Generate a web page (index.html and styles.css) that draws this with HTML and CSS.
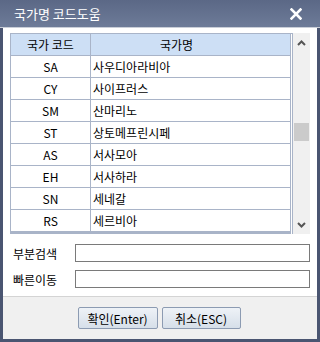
FILE: index.html
```html
<!DOCTYPE html>
<html>
<head>
    <meta charset="utf-8">
    <title>국가명 코드도움</title>
    <link rel="stylesheet" href="styles.css">
</head>
<body>
<div class="window">
    <div class="titlebar">
        <span class="title">국가명 코드도움</span>
        <svg class="close" width="12" height="12" viewBox="0 0 12 12">
            <path d="M1.5 1.5 L10.5 10.5 M10.5 1.5 L1.5 10.5" stroke="#fff" stroke-width="2.6" stroke-linecap="square"/>
        </svg>
    </div>

    <div class="content">
        <div class="list">
            <div class="table">
                <div class="row head">
                    <div class="code">국가 코드</div>
                    <div class="name">국가명</div>
                </div>
                <div class="row"><div class="code">SA</div><div class="name">사우디아라비아</div></div>
                <div class="row"><div class="code">CY</div><div class="name">사이프러스</div></div>
                <div class="row"><div class="code">SM</div><div class="name">산마리노</div></div>
                <div class="row"><div class="code">ST</div><div class="name">상토메프린시페</div></div>
                <div class="row"><div class="code">AS</div><div class="name">서사모아</div></div>
                <div class="row"><div class="code">EH</div><div class="name">서사하라</div></div>
                <div class="row"><div class="code">SN</div><div class="name">세네갈</div></div>
                <div class="row last"><div class="code">RS</div><div class="name">세르비아</div></div>
            </div>
            <div class="scrollbar">
                <svg class="arrow" width="9" height="6" viewBox="0 0 9 6">
                    <path d="M1 5 L4.5 1.5 L8 5" fill="none" stroke="#555" stroke-width="2"/>
                </svg>
                <div class="track"><div class="thumb"></div></div>
                <svg class="arrow" width="9" height="6" viewBox="0 0 9 6">
                    <path d="M1 1 L4.5 4.5 L8 1" fill="none" stroke="#555" stroke-width="2"/>
                </svg>
            </div>
        </div>

        <div class="field">
            <label for="search">부분검색</label>
            <input type="text" id="search">
        </div>
        <div class="field">
            <label for="jump">빠른이동</label>
            <input type="text" id="jump">
        </div>
    </div>

    <div class="footer">
        <button class="ok">확인(Enter)</button>
        <button class="cancel">취소(ESC)</button>
    </div>
</div>
</body>
</html>
```

FILE: styles.css
```css
body {
    margin: 0;
    font-family: "Noto Sans CJK KR", "Liberation Sans", sans-serif;
    font-size: 12px;
    color: #000;
}
.window {
    width: 320px;
    height: 342px;
    box-sizing: border-box;
    border: 3px solid #4a5571;
    border-top: 0;
    display: flex;
    flex-direction: column;
    background: #fff;
}
.titlebar {
    height: 28px;
    margin: 0 -3px;
    padding: 0 18px 0 14px;
    background: linear-gradient(#5b6886, #6d7b98);
    display: flex;
    align-items: center;
    justify-content: space-between;
    border-bottom: 1px solid #c9ced8;
    box-sizing: border-box;
}
.title {
    color: #fff;
    font-size: 13px;
}
.close {
    display: block;
    margin-top: 1px;
}
.content {
    padding: 5px 7px 0 7px;
    flex: 1;
}
.list {
    display: flex;
    height: 201px;
}
.table {
    width: 283px;
    box-sizing: border-box;
    border: 1px solid #a9b4c8;
    border-right: 3px double #a9b4c8;
    border-bottom: 0;
}
.row {
    display: flex;
    height: 22px;
    box-sizing: border-box;
    border-bottom: 1px solid #a9b4c8;
    line-height: 21px;
}
.row.last {
    height: 24px;
    border-bottom: 3px solid #a9b4c8;
}
.row.head {
    height: 22px;
    background: #cddff5;
}
.code {
    width: 79px;
    border-right: 1px solid #a9b4c8;
    text-align: center;
}
.name {
    flex: 1;
    padding-left: 2px;
}
.head .name {
    text-align: center;
    padding-right: 30px;
}
.scrollbar {
    width: 17px;
    background: #f0f0f0;
    display: flex;
    flex-direction: column;
    align-items: center;
    padding: 7px 0 6px;
    box-sizing: border-box;
}
.track {
    flex: 1;
    width: 100%;
    padding-top: 77px;
}
.thumb {
    width: 15px;
    height: 18px;
    margin: 0 auto;
    background: #cbcbcb;
}
.field {
    display: flex;
    align-items: center;
    padding-left: 3px;
    margin-top: 10px;
}
.field + .field {
    margin-top: 8px;
}
.field label {
    width: 62px;
}
.field input {
    width: 235px;
    height: 18px;
    box-sizing: border-box;
    border: 1px solid #7a7a7a;
    margin: 0;
    padding: 0 2px;
}
.footer {
    height: 43px;
    background: #f0f0f0;
    border-top: 1px solid #d4d4d4;
    box-sizing: border-box;
    display: flex;
    justify-content: center;
    align-items: flex-start;
    gap: 4px;
    padding-top: 10px;
    padding-right: 2px;
}
button {
    height: 22px;
    font-family: inherit;
    font-size: 12px;
    color: #000;
    background: linear-gradient(#eef2f7, #d6dfe9);
    border: 1px solid #8c9bb2;
    border-radius: 2px;
    padding: 0;
}
.ok {
    width: 80px;
}
.cancel {
    width: 79px;
}
```
